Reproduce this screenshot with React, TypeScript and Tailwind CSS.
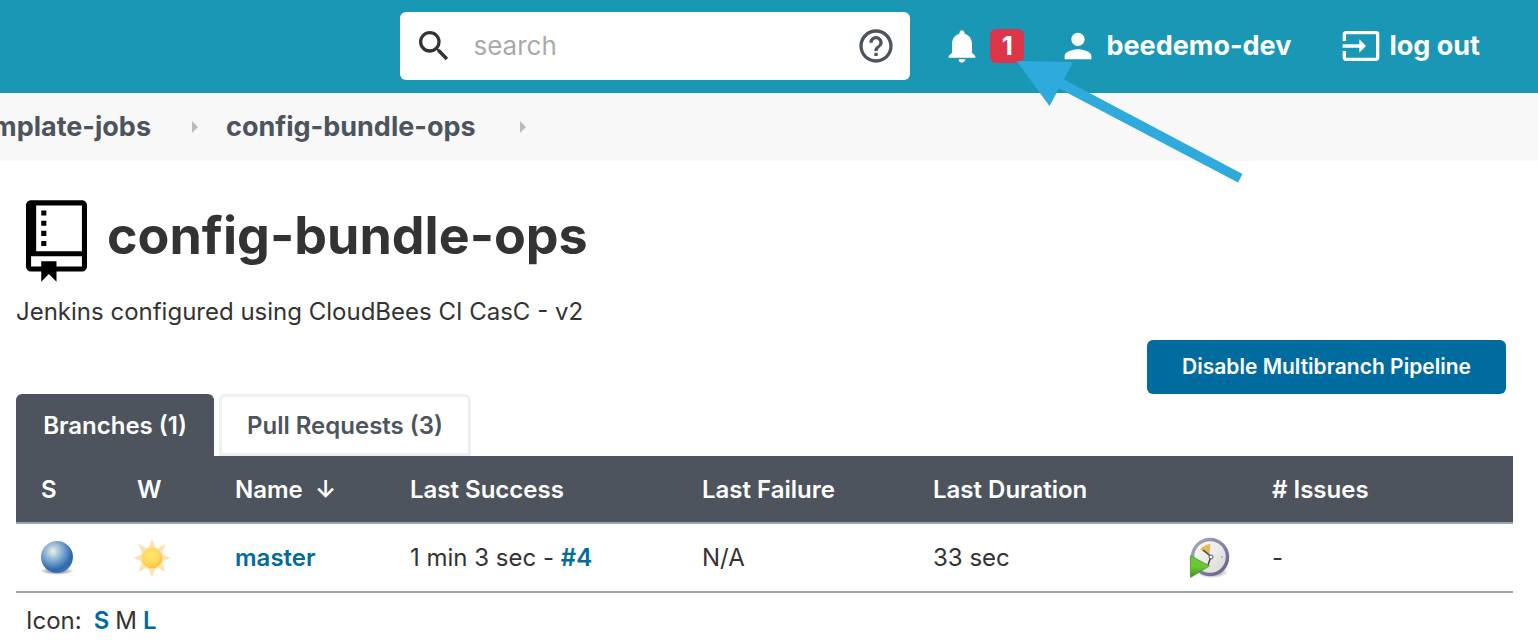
import { MdHelpOutline, MdInput, MdNotifications, MdPerson, MdSearch } from "react-icons/md";

function RepoIcon() {
  return (
    <svg viewBox="0 0 12 16" className="h-[82px] w-[61px] shrink-0" fill="#000" aria-hidden="true">
      <path d="M4 9H3V8h1v1zm0-3H3v1h1V6zm0-2H3v1h1V4zm0-2H3v1h1V2zm8-1v12c0 .55-.45 1-1 1H6v2l-1.5-1.5L3 16v-2H1c-.55 0-1-.45-1-1V1c0-.55.45-1 1-1h10c.55 0 1 .45 1 1zm-1 10H1v2h2v-1h3v1h5v-2zm0-10H2v9h9V1z" />
    </svg>
  );
}

function StatusBall() {
  return (
    <svg viewBox="0 0 40 40" className="size-10" role="img" aria-label="Success">
      <defs>
        <radialGradient id="ball" cx="0.38" cy="0.32" r="0.68">
          <stop offset="0" stopColor="#eef3dc" />
          <stop offset="0.22" stopColor="#b5cede" />
          <stop offset="0.55" stopColor="#6a9bcb" />
          <stop offset="0.85" stopColor="#2f68ab" />
          <stop offset="1" stopColor="#3c70ad" />
        </radialGradient>
        <radialGradient id="ballShadow">
          <stop offset="0.5" stopColor="#777" stopOpacity="0.6" />
          <stop offset="1" stopColor="#777" stopOpacity="0" />
        </radialGradient>
      </defs>
      <ellipse cx="20" cy="33" rx="17" ry="4" fill="url(#ballShadow)" />
      <circle cx="20" cy="19" r="16" fill="url(#ball)" />
    </svg>
  );
}

function SunIcon() {
  return (
    <svg viewBox="0 0 40 40" className="size-10" role="img" aria-label="Weather: sunny">
      <defs>
        <radialGradient id="sun" cx="0.42" cy="0.36" r="0.68">
          <stop offset="0" stopColor="#ffe66e" />
          <stop offset="0.6" stopColor="#ffd95c" />
          <stop offset="1" stopColor="#fdb944" />
        </radialGradient>
      </defs>
      <path
        d="M20 1 23.500 9.500 25.500 10.500 33.500 6 30 14.500 31 17 39 20 31 23 30 25.500 34 34 25.500 30 23.500 31 20 39.500 16.500 31 14.500 30 6 34 10 25.500 9 23 1 20 9 17 10 14.500 6 6 14.500 10 16.500 9.500Z"
        fill="#fee2ae"
      />
      <circle cx="20" cy="20" r="10.300" fill="url(#sun)" />
    </svg>
  );
}

function ScheduleIcon() {
  return (
    <svg viewBox="0 0 42 42" className="h-[42px] w-[42px]" aria-hidden="true">
      <defs>
        <linearGradient id="rim" x1="0" y1="0" x2="1" y2="1">
          <stop offset="0" stopColor="#a9a9c6" />
          <stop offset="1" stopColor="#625f86" />
        </linearGradient>
        <linearGradient id="face" x1="0" y1="0" x2="1" y2="1">
          <stop offset="0" stopColor="#fff" />
          <stop offset="1" stopColor="#d5d5d0" />
        </linearGradient>
        <linearGradient id="play" x1="0" y1="0" x2="0" y2="1">
          <stop offset="0" stopColor="#6fc43c" />
          <stop offset="0.5" stopColor="#6cc832" />
          <stop offset="1" stopColor="#3d8f1c" />
        </linearGradient>
        <radialGradient id="clockShadow">
          <stop offset="0.5" stopColor="#777" stopOpacity="0.6" />
          <stop offset="1" stopColor="#777" stopOpacity="0" />
        </radialGradient>
      </defs>
      <ellipse cx="23" cy="35" rx="16" ry="6" fill="url(#clockShadow)" />
      <circle cx="21" cy="20" r="17.500" fill="url(#face)" stroke="url(#rim)" strokeWidth="3.500" />
      <path d="M20.500 18 11 12.500Q15 7.500 21.500 7Z" fill="#e4b95a" />
      <path d="M14 13 22 19.500 19 28" fill="none" stroke="#444" strokeWidth="1.500" />
      <circle cx="22" cy="20" r="2" fill="#fff" stroke="#555" />
      <circle cx="33" cy="20" r="1" fill="#aaa" />
      <path d="M1.500 18.500 20.500 29 1.500 40.500Z" fill="url(#play)" stroke="#4d9a2b" strokeWidth="0.800" />
    </svg>
  );
}

function Crumb() {
  return (
    <svg viewBox="0 0 6 12" className="h-3 w-1.5 shrink-0" fill="#bcbcbc" aria-hidden="true">
      <path d="M0 0 6 6 0 12Z" />
    </svg>
  );
}

function Pointer() {
  return (
    <svg
      viewBox="0 0 228 124"
      className="pointer-events-none absolute top-[60px] right-[294px] h-[124px] w-[228px]"
      fill="#2eaadc"
      aria-hidden="true"
    >
      <path d="M0.500 1 57 2 48 19.500 226.500 114 222 122.500 43 28.500 33.500 46Z" />
    </svg>
  );
}

const headings = ["Last Success", "Last Failure", "Last Duration"];

export default function App() {
  return (
    <div className="relative min-h-screen overflow-hidden bg-white font-['Inter',sans-serif] text-2xl text-[#333]">
      <header className="flex items-center justify-end bg-[#1997b5] pt-3 pr-[58px] pb-[13px] text-[27px] font-bold text-white">
        <div className="flex h-[68px] w-[510px] items-center rounded-md bg-white pr-3.5 pl-3.5">
          <MdSearch className="size-10 shrink-0 text-[#333]" aria-hidden="true" />
          <input
            type="search"
            aria-label="Search"
            placeholder="search"
            className="ml-[19px] min-w-0 flex-1 bg-transparent text-[26px] font-normal text-[#333] outline-none placeholder:text-[#aaa]"
          />
          <a href="#help" aria-label="Search help" className="text-[#4d545d]">
            <MdHelpOutline className="size-10" />
          </a>
        </div>
        <a href="#notifications" aria-label="Notifications" className="ml-8 flex items-center gap-2">
          <MdNotifications className="size-10" />
          <span className="flex size-[34px] items-center justify-center rounded-md bg-[#dc3548] text-[26px]">1</span>
        </a>
        <a href="#user" className="ml-[34px] flex items-center gap-2">
          <MdPerson className="size-10" />
          beedemo-dev
        </a>
        <a href="#logout" className="ml-[50px] flex items-center gap-2">
          <MdInput className="size-10" />
          log out
        </a>
      </header>

      <nav aria-label="Breadcrumb" className="flex h-[68px] items-center bg-[#f8f8f8] text-[27px] font-bold text-[#4d545d]">
        <div className="flex w-[151px] shrink-0 justify-end whitespace-nowrap">
          <a href="#template-jobs">template-jobs</a>
        </div>
        <div className="flex items-center gap-7 pl-[41px]">
          <Crumb />
          <a href="#config-bundle-ops">config-bundle-ops</a>
        </div>
        <div className="pl-11">
          <Crumb />
        </div>
      </nav>

      <main className="pr-[25px] pl-4">
        <div className="flex gap-5 pt-[39px] pl-2.5">
          <RepoIcon />
          <h1 className="text-[52px] leading-[72px] font-bold">config-bundle-ops</h1>
        </div>
        <p className="mt-3 leading-9">Jenkins configured using CloudBees CI CasC - v2</p>

        <div className="mt-2.5 flex justify-end pr-[7px]">
          <button type="button" className="h-[54px] w-[359px] rounded-md bg-[#006b9f] text-[21px] font-semibold text-white">
            Disable Multibranch Pipeline
          </button>
        </div>

        <div role="tablist" className="flex gap-[5px] font-semibold">
          <button type="button" role="tab" aria-selected="true" className="h-[62px] w-[198px] rounded-t-md bg-[#4d545d] pt-0.5 text-white">
            Branches (1)
          </button>
          <button type="button" role="tab" aria-selected="false" className="h-[62px] w-[252px] rounded-t-md border-[3px] border-[#ebf0f1] pt-0.5 text-[#4d545d]">
            Pull Requests (3)
          </button>
        </div>

        <table className="w-full table-fixed border-collapse text-left">
          <colgroup>
            <col className="w-[96px]" />
            <col className="w-[98px]" />
            <col className="w-[175px]" />
            <col className="w-[292px]" />
            <col className="w-[231px]" />
            <col className="w-[257px]" />
            <col className="w-[82px]" />
            <col />
          </colgroup>
          <thead>
            <tr className="h-[67px] border-b-2 border-[#99a6ac] bg-[#4d545d] text-white">
              <th className="pt-0.5 pl-[25px] font-semibold">S</th>
              <th className="pt-0.5 pl-[25px] font-semibold">W</th>
              <th className="pt-0.5 pl-[25px] font-semibold whitespace-nowrap">
                <a href="#sort-name">Name&nbsp; ↓</a>
              </th>
              {headings.map((h) => (
                <th key={h} className="pt-0.5 pl-[25px] font-semibold">
                  {h}
                </th>
              ))}
              <th aria-label="Schedule" />
              <th className="pt-0.5 pl-[25px] font-semibold"># Issues</th>
            </tr>
          </thead>
          <tbody>
            <tr className="h-[69px] border-b-2 border-[#99a6ac]">
              <td className="pl-[21px]">
                <StatusBall />
              </td>
              <td className="pl-5">
                <SunIcon />
              </td>
              <td className="pl-[25px]">
                <a href="#master" className="font-semibold text-[#006b9f]">
                  master
                </a>
              </td>
              <td className="pl-[25px]">
                1 min 3 sec -{" "}
                <a href="#4" className="font-semibold text-[#006b9f]">
                  #4
                </a>
              </td>
              <td className="pl-[25px]">N/A</td>
              <td className="pl-[25px]">33 sec</td>
              <td className="pl-6">
                <a href="#build" aria-label="Schedule a build">
                  <ScheduleIcon />
                </a>
              </td>
              <td className="pl-[25px]">-</td>
            </tr>
          </tbody>
        </table>

        <div className="flex gap-1.5 pt-2.5 pl-2.5 leading-9">
          <span className="pr-1.5">Icon:</span>
          <a href="#small" className="font-semibold text-[#006b9f]">
            S
          </a>
          <span>M</span>
          <a href="#large" className="font-semibold text-[#006b9f]">
            L
          </a>
        </div>
      </main>
      <Pointer />
    </div>
  );
}
